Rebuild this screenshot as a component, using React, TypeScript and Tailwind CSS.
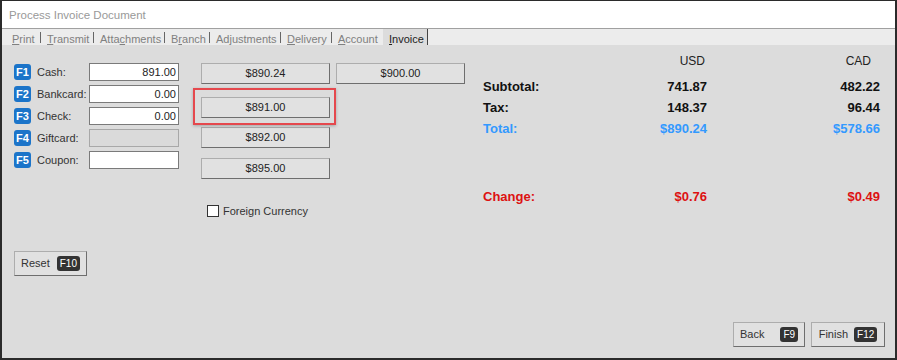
import React from 'react';

const tabs: { pre: string; u: string; post: string; w: number }[] = [
    { pre: '', u: 'P', post: 'rint', w: 35 },
    { pre: '', u: 'T', post: 'ransmit', w: 53 },
    { pre: 'Atta', u: 'c', post: 'hments', w: 71 },
    { pre: 'B', u: 'r', post: 'anch', w: 45 },
    { pre: 'Ad', u: 'j', post: 'ustments', w: 71 },
    { pre: '', u: 'D', post: 'elivery', w: 51 },
    { pre: '', u: 'A', post: 'ccount', w: 51 },
];

const payments = [
    { key: 'F1', label: 'Cash:', value: '891.00', disabled: false },
    { key: 'F2', label: 'Bankcard:', value: '0.00', disabled: false },
    { key: 'F3', label: 'Check:', value: '0.00', disabled: false },
    { key: 'F4', label: 'Giftcard:', value: '', disabled: true },
    { key: 'F5', label: 'Coupon:', value: '', disabled: false },
];

function KeyBadge({ children }: { children: React.ReactNode }) {
    return (
        <span className="inline-flex items-center justify-center h-[15px] px-[3px] rounded-[3px] bg-[#333] text-white text-[10px] leading-none">
            {children}
        </span>
    );
}

function CashButton({ label, className = '' }: { label: string; className?: string }) {
    return (
        <button className={`w-[129px] h-[21px] bg-[#e1e1e1] border border-[#adadad] border-r-[#6e6e6e] border-b-[#6e6e6e] text-[11px] text-[#222] ${className}`}>
            {label}
        </button>
    );
}

export default function App() {
    return (
        <div
            className="w-[897px] h-[360px] flex flex-col border-x-2 border-b-2 border-t border-[#2b2b2b] bg-[#dcdcdc] overflow-hidden"
            style={{ fontFamily: '"Liberation Sans", Arial, sans-serif' }}
        >
            {/* title bar */}
            <div className="h-[28px] bg-white border-b border-[#a0a0a0] flex items-center pl-[7px] pt-[2px]">
                <span className="text-[11.5px] text-[#999]">Process Invoice Document</span>
            </div>

            {/* tabs */}
            <div className="h-[16px] bg-[#ececec] flex pl-[4px] text-[11px] leading-none">
                {tabs.map((t) => (
                    <div key={t.post} className="flex items-end justify-between" style={{ width: t.w }}>
                        <span className="pl-[6px] text-[#808080]">
                            {t.pre}
                            <span className="underline">{t.u}</span>
                            {t.post}
                        </span>
                        {t.u !== 'A' && <span className="w-px h-[11px] bg-[#666] mb-[2px]" />}
                    </div>
                ))}
                <div className="w-[45px] bg-[#dcdcdc] border-r border-[#444] flex items-end">
                    <span className="pl-[6px] text-[#222]">
                        <span className="underline">I</span>nvoice
                    </span>
                </div>
            </div>

            {/* content */}
            <div className="flex-1 flex flex-col">
                <div className="h-[190px] flex pl-[12px]">
                    {/* payment fields */}
                    <div className="w-[165px] pt-[16px] flex flex-col">
                        {payments.map((p) => (
                            <div key={p.key} className="h-[22px] flex items-center">
                                <span className="w-[17px] h-[16px] rounded-[3px] bg-[#1b74c9] text-white text-[11px] font-bold flex items-center justify-center">
                                    {p.key}
                                </span>
                                <span className="ml-[6px] w-[52px] text-[11px] text-[#333]">{p.label}</span>
                                <div
                                    className={`w-[90px] h-[18px] border flex items-center justify-end pr-[2px] text-[11px] text-[#222] ${
                                        p.disabled ? 'bg-[#dadada] border-[#a8a8a8]' : 'bg-white border-[#7a7a7a]'
                                    }`}
                                >
                                    {p.value}
                                </div>
                            </div>
                        ))}
                    </div>

                    {/* quick cash buttons */}
                    <div className="ml-[22px] w-[264px] pt-[18px] flex flex-col">
                        <div className="flex gap-[6px]">
                            <CashButton label="$890.24" />
                            <CashButton label="$900.00" />
                        </div>
                        <div className="relative mt-[10px] w-[129px]">
                            <CashButton label="$891.00" />
                            <div className="absolute left-[-8px] right-[-6px] top-[-6px] bottom-[-7px] border-2 border-[#e5484d] shadow-[0_1px_3px_rgba(0,0,0,0.25)]" />
                        </div>
                        <CashButton label="$892.00" className="mt-[9px]" />
                        <CashButton label="$895.00" className="mt-[10px]" />
                        <label className="mt-[24px] ml-[6px] flex items-center gap-[4px] text-[11px] text-[#333]">
                            <span className="w-[12px] h-[12px] bg-white border border-[#333]" />
                            Foreign Currency
                        </label>
                    </div>

                    {/* totals */}
                    <div className="ml-[18px] w-[397px] flex flex-col">
                        <div className="mt-[7px] h-[16px] grid grid-cols-[150px_74px_173px] items-center text-[12px] text-[#222]">
                            <span />
                            <span className="text-right pr-[2px]">USD</span>
                            <span className="text-right pr-[9px]">CAD</span>
                        </div>
                        <div className="mt-[8px] text-[13px] font-bold">
                            <div className="h-[21px] grid grid-cols-[150px_74px_173px] items-center text-[#111]">
                                <span>Subtotal:</span>
                                <span className="text-right">741.87</span>
                                <span className="text-right">482.22</span>
                            </div>
                            <div className="h-[21px] grid grid-cols-[150px_74px_173px] items-center text-[#111]">
                                <span>Tax:</span>
                                <span className="text-right">148.37</span>
                                <span className="text-right">96.44</span>
                            </div>
                            <div className="h-[21px] grid grid-cols-[150px_74px_173px] items-center text-[#3399ff]">
                                <span>Total:</span>
                                <span className="text-right">$890.24</span>
                                <span className="text-right">$578.66</span>
                            </div>
                            <div className="mt-[47px] h-[21px] grid grid-cols-[150px_74px_173px] items-center text-[#dd1111]">
                                <span>Change:</span>
                                <span className="text-right">$0.76</span>
                                <span className="text-right">$0.49</span>
                            </div>
                        </div>
                    </div>
                </div>

                {/* reset */}
                <div className="mt-[16px] pl-[12px]">
                    <button className="w-[73px] h-[25px] bg-[#e1e1e1] border border-[#adadad] border-r-[#6e6e6e] border-b-[#6e6e6e] flex items-center justify-center gap-[7px] text-[11px] text-[#333]">
                        Reset <KeyBadge>F10</KeyBadge>
                    </button>
                </div>

                {/* footer */}
                <div className="mt-auto mb-[11px] pr-[10px] flex justify-end gap-[6px]">
                    <button className="w-[72px] h-[25px] bg-[#e1e1e1] border border-[#adadad] border-r-[#6e6e6e] border-b-[#6e6e6e] flex items-center justify-center gap-[16px] text-[11px] text-[#333]">
                        Back <KeyBadge>F9</KeyBadge>
                    </button>
                    <button className="w-[74px] h-[25px] bg-[#e1e1e1] border border-[#adadad] border-r-[#6e6e6e] border-b-[#6e6e6e] flex items-center justify-center gap-[6px] text-[11px] text-[#333]">
                        Finish <KeyBadge>F12</KeyBadge>
                    </button>
                </div>
            </div>
        </div>
    );
}
